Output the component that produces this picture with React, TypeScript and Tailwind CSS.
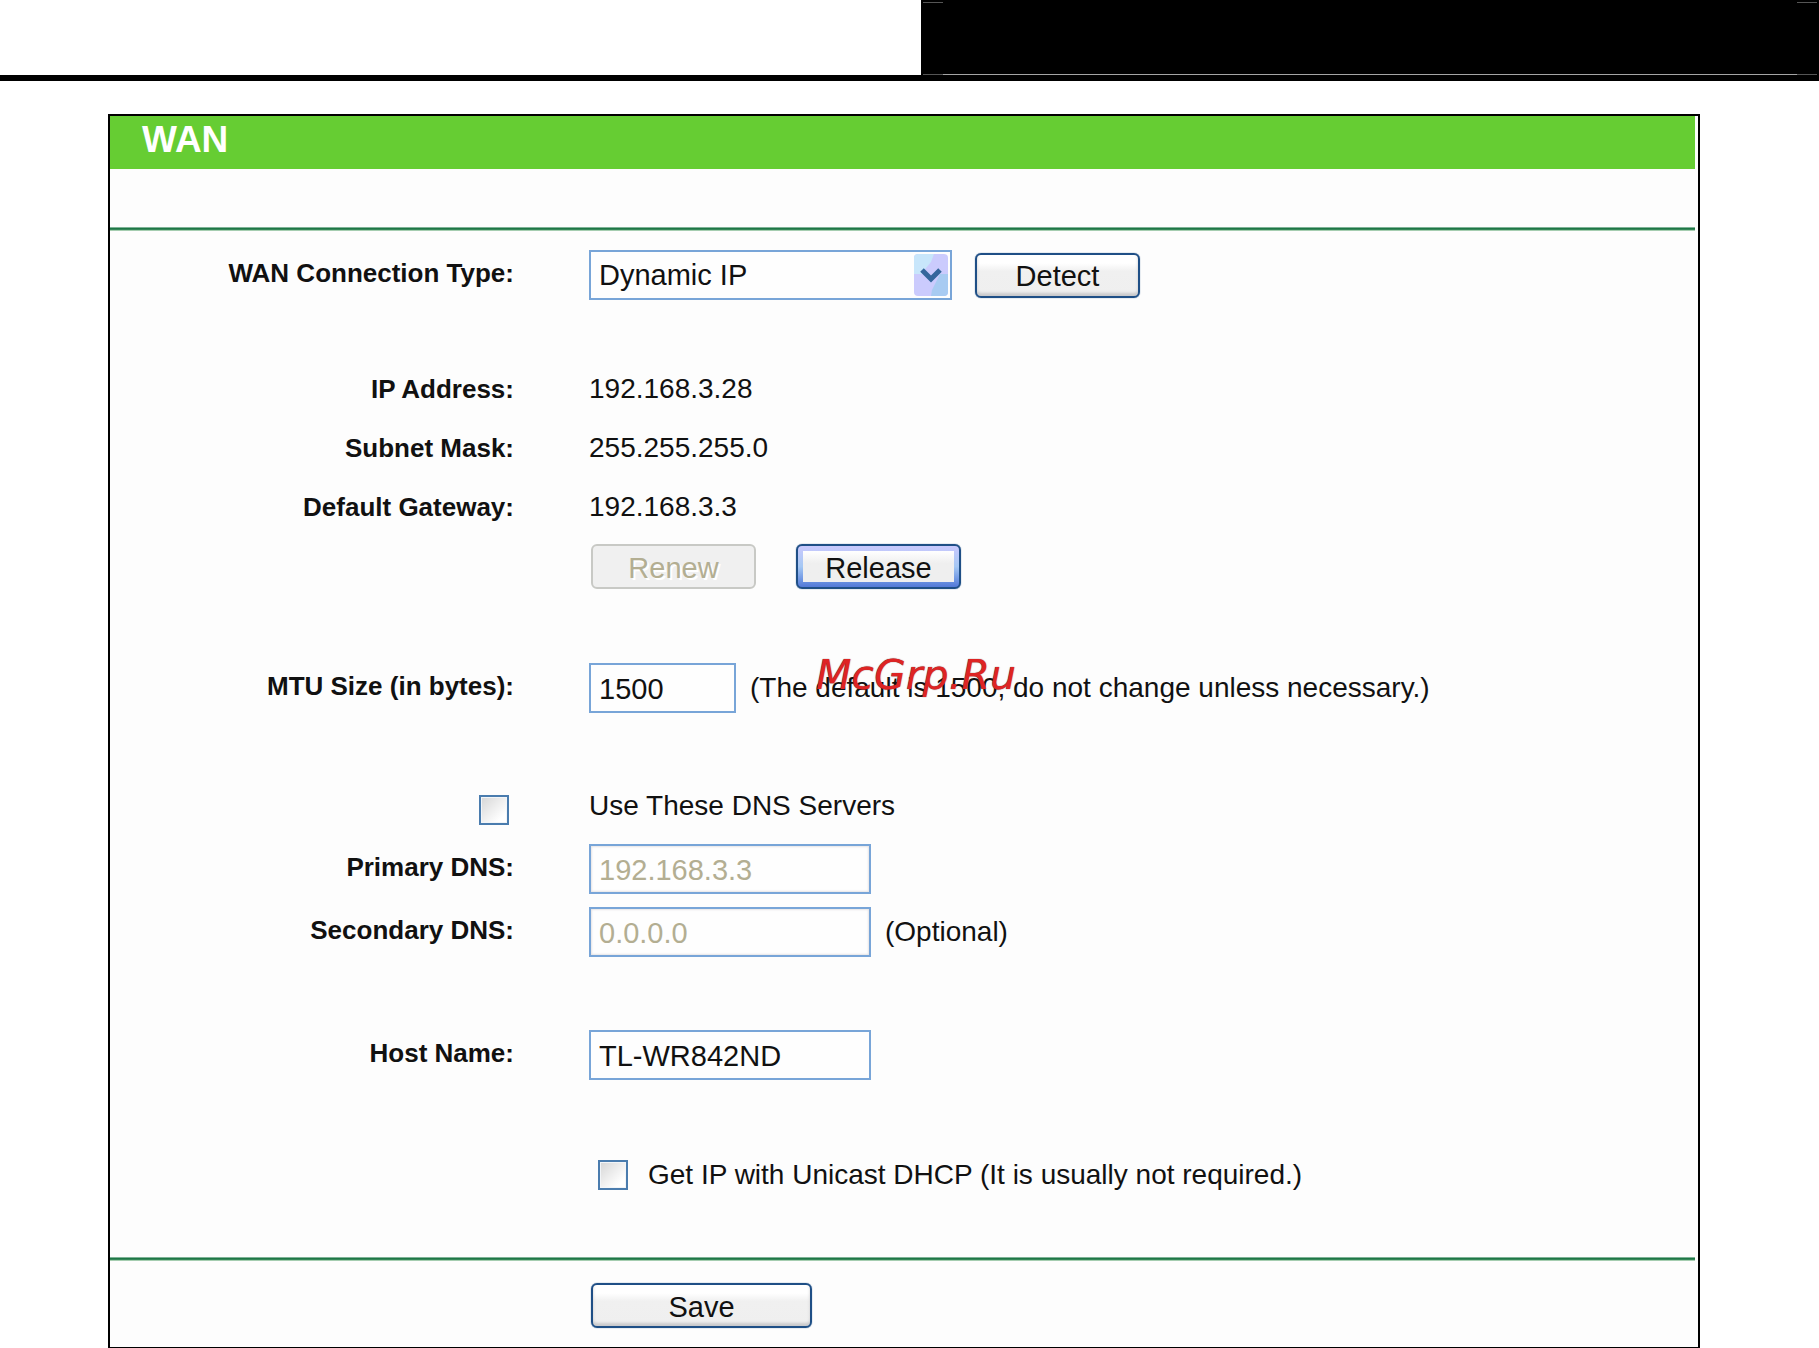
import React, { useState } from 'react';

interface RowProps {
  label?: React.ReactNode;
  className?: string;
  children: React.ReactNode;
}

const FIELD =
  'h-[50px] border-2 border-[#78a5d8] bg-[#fefefe] px-2 pt-[3px] text-[29px] text-[#111] outline-none disabled:text-[#b3ae92] disabled:shadow-[inset_0_0_2px_1px_#e6e4e6]';
const BUTTON =
  'flex h-[45px] items-center justify-center rounded-[6px] border-2 border-[#1f4f86] bg-linear-to-b from-white from-20% via-[#f0f0f0] via-40% to-[#efefef] pt-[2px] text-[29px] text-[#111] shadow-[inset_0_-3px_3px_#c9c9cb,0_0_1px_#1f4f86]';
const CHECKBOX =
  'h-[30px] w-[30px] shrink-0 appearance-none border-2 border-[#4a7cae] bg-linear-to-br from-[#d6d6d6] via-[#f0f0f0] to-white to-80% shadow-[inset_0_0_0_1px_#f2f5f8] checked:bg-[#4a7cae]';

const Row = ({ label, className = 'h-[50px]', children }: RowProps) => (
  <div className={`grid grid-cols-[404px_1fr] items-center gap-x-[75px] ${className}`}>
    <div className="flex justify-end text-right text-[26px] leading-[34px] font-bold">{label}</div>
    <div className="flex items-center text-[28px] leading-[34px] whitespace-nowrap">{children}</div>
  </div>
);

const Rule = () => (
  <div className="mr-[3px] h-[4px] border-t border-b border-t-[#7fb397] border-b-[#a5cdb0] bg-linear-to-b from-[#0f6e3c] to-[#3f8f62]" />
);

export default function App() {
  const [useDns, setUseDns] = useState(false);
  const [unicast, setUnicast] = useState(false);

  return (
    <div className="min-h-screen bg-white font-['Liberation_Sans',Arial,sans-serif] text-[#111]">
      {/* Page header strip */}
      <header className="flex h-[81px] justify-end border-b-[6px] border-black">
        <div className="flex w-[898px] flex-col justify-between bg-black px-[2px] pt-[2px]">
          <div className="flex justify-between">
            <span className="h-px w-5 bg-[#555]" />
            <span className="h-px w-5 bg-[#555]" />
          </div>
          <div className="flex">
            <span className="h-px w-5 bg-[#555]" />
            <span className="h-px flex-1 bg-[#a5a5a5]" />
            <span className="h-px w-5 bg-[#555]" />
          </div>
        </div>
      </header>

      <main className="mt-[33px] mr-[119px] ml-[108px] border-2 border-b border-black bg-[#fdfdfd]">
        <h1 className="mr-[3px] h-[53px] bg-[#66cd33] pl-8 text-[37px] leading-[48px] font-bold text-white">WAN</h1>
        <div className="h-[58px]" />
        <Rule />

        <form className="pt-[19px]" onSubmit={e => e.preventDefault()}>
          <Row label={<label htmlFor="type" className="pb-1">WAN Connection Type:</label>}>
            <div className="relative">
              <select id="type" className="h-[50px] w-[363px] appearance-none border-2 border-[#78a5d8] bg-[#fefefe] px-2 text-[29px] text-[#111] outline-none">
                <option>Dynamic IP</option>
                <option>Static IP</option>
                <option>PPPoE</option>
              </select>
              <svg className="pointer-events-none absolute top-[4px] right-[4px]" width="34" height="42" viewBox="0 0 34 42">
                <defs>
                  <clipPath id="arrow-box"><rect width="34" height="42" rx="4" /></clipPath>
                </defs>
                <g clipPath="url(#arrow-box)">
                  <rect width="34" height="42" fill="#cbcbfd" />
                  <path d="M0 0H20L17 8L12 14L8 20H0Z" fill="#c8e6fb" />
                  <path d="M34 20H26L22 28L18 36L17 42H34Z" fill="#a8cbf2" />
                </g>
                <path d="M8 16L17 25L26 16" fill="none" stroke="#34669c" strokeWidth="5" />
              </svg>
            </div>
            <button type="button" className={`${BUTTON} ml-[23px] w-[165px]`}>Detect</button>
          </Row>

          <Row className="mt-[59px] h-[59px]" label="IP Address:">192.168.3.28</Row>
          <Row className="h-[59px]" label="Subnet Mask:">255.255.255.0</Row>
          <Row className="h-[59px]" label="Default Gateway:">192.168.3.3</Row>
          <Row className="mt-[8px] h-[45px]">
            <button
              type="button"
              disabled
              className="ml-[2px] flex h-[45px] w-[165px] items-center justify-center rounded-[6px] border-2 border-[#c8c9c5] bg-[#f0f0f0] pt-[2px] text-[29px] text-[#b3ae92] text-shadow-[2px_2px_0_#fff]"
            >
              Renew
            </button>
            <button
              type="button"
              className="ml-10 flex h-[45px] w-[165px] items-center justify-center rounded-[6px] border-2 border-[#1f4f86] bg-linear-to-b from-[#c9c9fd] via-[#a5c8f4] to-[#5379d8] p-[5px] shadow-[0_0_1px_#1f4f86]"
            >
              <span className="flex h-full w-full items-center justify-center bg-linear-to-b from-white to-[#efefef] to-40% pt-[2px] text-[29px] text-[#111]">Release</span>
            </button>
          </Row>

          <Row className="mt-[74px] h-[50px]" label={<label htmlFor="mtu" className="pb-1">MTU Size (in bytes):</label>}>
            <input id="mtu" type="text" defaultValue="1500" className={`${FIELD} w-[147px]`} />
            <span className="relative ml-[14px]">
              (The default is 1500, do not change unless necessary.)
              <span className="absolute -top-4 left-[66px] font-['DejaVu_Sans',sans-serif] text-[41px] leading-10 text-[#de2424] italic text-shadow-[0_0_1px_#5a2020]">
                McGrp.Ru
              </span>
            </span>
          </Row>

          <Row
            className="mt-[68px] h-[50px]"
            label={
              <input
                id="use-dns"
                type="checkbox"
                checked={useDns}
                onChange={e => setUseDns(e.target.checked)}
                className={`${CHECKBOX} mt-2 mr-[5px]`}
              />
            }
          >
            <label htmlFor="use-dns">Use These DNS Servers</label>
          </Row>
          <Row className="mt-[13px] h-[50px]" label={<label htmlFor="dns1" className="pb-1">Primary DNS:</label>}>
            <input id="dns1" type="text" defaultValue="192.168.3.3" disabled={!useDns} className={`${FIELD} w-[282px]`} />
          </Row>
          <Row className="mt-[13px] h-[50px]" label={<label htmlFor="dns2" className="pb-1">Secondary DNS:</label>}>
            <input id="dns2" type="text" defaultValue="0.0.0.0" disabled={!useDns} className={`${FIELD} w-[282px]`} />
            <span className="ml-[14px]">(Optional)</span>
          </Row>

          <Row className="mt-[73px] h-[50px]" label={<label htmlFor="host" className="pb-1">Host Name:</label>}>
            <input id="host" type="text" defaultValue="TL-WR842ND" className={`${FIELD} w-[282px]`} />
          </Row>

          <Row className="mt-[70px] h-[50px]">
            <input
              id="unicast"
              type="checkbox"
              checked={unicast}
              onChange={e => setUnicast(e.target.checked)}
              className={`${CHECKBOX} ml-[9px]`}
            />
            <label htmlFor="unicast" className="ml-5">Get IP with Unicast DHCP (It is usually not required.)</label>
          </Row>

          <div className="mt-[57px]">
            <Rule />
          </div>
          <Row className="mt-[22px] mb-[19px] h-[45px]">
            <button type="submit" className={`${BUTTON} ml-[2px] w-[221px]`}>Save</button>
          </Row>
        </form>
      </main>
    </div>
  );
}
